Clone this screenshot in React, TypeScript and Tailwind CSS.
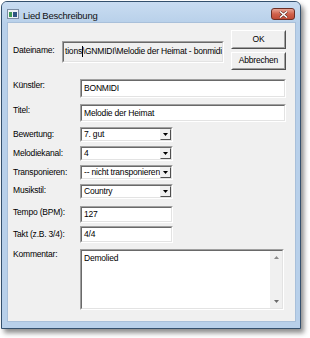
import React from "react";

const FONT = { fontFamily: '"Liberation Sans", Arial, sans-serif' };
const TXT = "text-[8.5px] leading-[11px] tracking-[-0.2px] text-black whitespace-nowrap";

function Sunken({ className = "", inner = "", children }: { className?: string; inner?: string; children?: React.ReactNode }) {
  return (
    <div className={`border border-t-[#a0a0a0] border-l-[#a0a0a0] border-b-white border-r-white ${className}`}>
      <div className={`w-full h-full border border-t-[#696969] border-l-[#696969] border-b-[#e3e3e3] border-r-[#e3e3e3] ${inner}`}>
        {children}
      </div>
    </div>
  );
}

function Button({ label }: { label: string }) {
  return (
    <div className="w-[55px] h-[19px] border border-t-white border-l-white border-b-[#505050] border-r-[#505050] bg-[#f0f0f0]">
      <div className="w-full h-full border border-t-[#f0f0f0] border-l-[#f0f0f0] border-b-[#a0a0a0] border-r-[#a0a0a0] flex items-center justify-center">
        <div className={TXT}>{label}</div>
      </div>
    </div>
  );
}

function TextField({ value, w, h }: { value: string; w: string; h: string }) {
  return (
    <Sunken className={`${w} ${h}`} inner="bg-white flex items-center pl-[2px] overflow-hidden">
      <div className={TXT}>{value}</div>
    </Sunken>
  );
}

function Select({ value }: { value: string }) {
  return (
    <Sunken className="w-[93px] h-[15px]" inner="bg-white flex items-stretch overflow-hidden">
      <div className="flex-1 flex items-center pl-[2px] overflow-hidden">
        <div className={TXT}>{value}</div>
      </div>
      <div className="w-[11px] shrink-0 border border-t-[#f0f0f0] border-l-[#f0f0f0] border-b-[#505050] border-r-[#505050] bg-[#f0f0f0] flex items-center justify-center">
        <svg width="5" height="3" viewBox="0 0 5 3">
          <polygon points="0,0 5,0 2.5,3" fill="#000" />
        </svg>
      </div>
    </Sunken>
  );
}

function Label({ text, pt = "pt-[1px]" }: { text: string; pt?: string }) {
  return (
    <div className={`w-[67px] shrink-0 ${pt}`}>
      <div className={TXT}>{text}</div>
    </div>
  );
}

export default function App() {
  return (
    <div className="w-[310px] h-[338px] bg-white overflow-hidden" style={FONT}>
      <div className="ml-[1px] mt-[1px] w-[300px] h-[328px] border border-[#34506d] bg-[#b8d0ea] rounded-t-[6px] shadow-[3px_4px_5px_rgba(0,0,0,0.45)] flex flex-col">
        {/* Title bar */}
        <div className="h-[20px] flex items-start pl-[5px] pr-[4px] shrink-0 bg-gradient-to-b from-[#c9dcf1] to-[#b9d1ea] rounded-t-[5px]">
          <svg className="mt-[7px] shrink-0" width="12" height="10" viewBox="0 0 12 10">
            <rect x="0.5" y="0.5" width="11" height="9" fill="#eef2f6" stroke="#7b8ca3" />
            <rect x="2" y="3" width="3" height="5" fill="#3f9a55" />
            <rect x="6" y="3" width="4" height="5" fill="#2f5582" />
          </svg>
          <div className="ml-[4px] mt-[8px] text-[9.5px] leading-[12px] tracking-[-0.25px] text-[#111] whitespace-nowrap">Lied Beschreibung</div>
          <div className="ml-auto mr-[1px] mt-[6px] w-[24px] h-[12px] rounded-[3px] border border-[#6b2e25] bg-gradient-to-b from-[#e8a494] via-[#d0614b] to-[#c04a35] flex items-center justify-center">
            <svg width="9" height="7" viewBox="0 0 9 7">
              <path d="M1 0.5 L8 6.5 M8 0.5 L1 6.5" stroke="#5a2a22" strokeWidth="2.6" />
              <path d="M1 0.5 L8 6.5 M8 0.5 L1 6.5" stroke="#ffffff" strokeWidth="1.5" />
            </svg>
          </div>
        </div>
        {/* Client */}
        <div className="ml-[5px] mr-[4px] w-[289px] h-[300px] bg-[#f0f0f0] border border-[#a9c0da] flex flex-col pl-[5px]">
          {/* Top section */}
          <div className="h-[47px] flex shrink-0">
            <div className="pt-[18px] flex items-start">
              <div className="w-[49px] pt-[4px]">
                <div className={TXT}>Dateiname:</div>
              </div>
              <Sunken className="w-[162px] h-[22px]" inner="bg-[#f0f0f0] pl-[1px] pt-[3px] overflow-hidden">
                <div className={`${TXT} flex items-start`}>
                  <span>tions</span>
                  <span className="w-[1px] h-[11px] bg-black" />
                  <span>\GNMIDI\Melodie der Heimat - bonmidi</span>
                </div>
              </Sunken>
            </div>
            <div className="ml-[7px] pt-[7px] flex flex-col gap-[3px]">
              <Button label="OK" />
              <Button label="Abbrechen" />
            </div>
          </div>
          {/* Künstler */}
          <div className="mt-[9px] flex items-start">
            <Label text="Künstler:" pt="pt-[1px]" />
            <TextField value="BONMIDI" w="w-[206px]" h="h-[19px]" />
          </div>
          <div className="mt-[6px] flex items-start">
            <Label text="Titel:" pt="pt-[1px]" />
            <TextField value="Melodie der Heimat" w="w-[206px]" h="h-[18px]" />
          </div>
          <div className="mt-[5px] flex items-start">
            <Label text="Bewertung:" pt="pt-[2px]" />
            <Select value="7. gut" />
          </div>
          <div className="mt-[4px] flex items-start">
            <Label text="Melodiekanal:" pt="pt-[2px]" />
            <Select value="4" />
          </div>
          <div className="mt-[4px] flex items-start">
            <Label text="Transponieren:" pt="pt-[2px]" />
            <Select value="-- nicht transponieren" />
          </div>
          <div className="mt-[4px] flex items-start">
            <Label text="Musikstil:" pt="pt-[1px]" />
            <Select value="Country" />
          </div>
          <div className="mt-[7px] flex items-start">
            <Label text="Tempo (BPM):" pt="pt-[1px]" />
            <TextField value="127" w="w-[93px]" h="h-[17px]" />
          </div>
          <div className="mt-[3px] flex items-start">
            <Label text="Takt (z.B. 3/4):" pt="pt-[3px]" />
            <TextField value="4/4" w="w-[93px]" h="h-[17px]" />
          </div>
          <div className="mt-[6px] flex items-start">
            <Label text="Kommentar:" pt="pt-[0px]" />
            <Sunken className="w-[204px] h-[61px]" inner="bg-white flex">
              <div className="flex-1 pl-[2px] pt-[2px]">
                <div className={TXT}>Demolied</div>
              </div>
              <div className="w-[12px] bg-[#f0f0f0] flex flex-col items-center justify-between py-[5px]">
                <svg width="5" height="3" viewBox="0 0 5 3"><polygon points="0,3 5,3 2.5,0" fill="#8a8a8a" /></svg>
                <svg width="5" height="3" viewBox="0 0 5 3"><polygon points="0,0 5,0 2.5,3" fill="#6a6a6a" /></svg>
              </div>
            </Sunken>
          </div>
        </div>
      </div>
    </div>
  );
}
